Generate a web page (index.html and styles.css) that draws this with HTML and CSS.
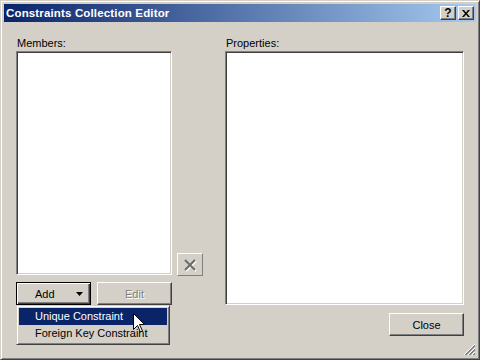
FILE: index.html
```html
<!DOCTYPE html>
<html lang="en">
<head>
  <meta charset="UTF-8">
  <title>Constraints Collection Editor</title>
  <link rel="stylesheet" href="styles.css">
</head>
<body>
  <div class="window">
    <div class="titlebar">
      <span class="title">Constraints Collection Editor</span>
      <div class="tbtns">
        <span class="tbtn help">?</span>
        <span class="tbtn">
          <svg width="8" height="7" viewBox="0 0 8 7"><path d="M0 0h2l2 2.5L6 0h2L5 3.5 8 7H6L4 4.5 2 7H0l3-3.5z" fill="#000"/></svg>
        </span>
      </div>
    </div>

    <div class="client">
      <div class="left">
        <div class="label">Members:</div>
        <div class="listrow">
          <div class="list members"></div>
          <div class="delbtn">
            <svg width="14" height="14" viewBox="0 0 14 14">
              <path d="M2 2L12 12M12 2L2 12" stroke="#fff" stroke-width="2" transform="translate(1 1)"/>
              <path d="M2 2L12 12M12 2L2 12" stroke="#6a6a6a" stroke-width="2"/>
            </svg>
          </div>
        </div>
        <div class="btnrow">
          <div class="btn default">
            <span class="addtxt">Add</span>
            <svg width="7" height="4" viewBox="0 0 7 4"><path d="M0 0h7L3.5 4z" fill="#000"/></svg>
          </div>
          <div class="btn disabled">Edit</div>
        </div>
      </div>

      <div class="right">
        <div class="label">Properties:</div>
        <div class="list props"></div>
        <div class="closerow">
          <div class="btn">Close</div>
        </div>
      </div>

      <div class="menu">
        <div class="item active">Unique Constraint</div>
        <div class="item">Foreign Key Constraint</div>
      </div>

      <svg class="pointer" width="12" height="20" viewBox="0 0 12 20">
        <path d="M0.5 0.5V16.5L4.5 12.5L7.5 19L9.5 18L6.5 11.5H11.5Z" fill="#fff" stroke="#000" stroke-width="1"/>
      </svg>

      <svg class="grip" width="13" height="13" viewBox="0 0 13 13">
        <path d="M12 1L1 12M12 5L5 12M12 9L9 12" stroke="#fff" stroke-width="1"/>
        <path d="M12 2L2 12M12 3L3 12M12 6L6 12M12 7L7 12M12 10L10 12M12 11L11 12" stroke="#808080" stroke-width="1"/>
      </svg>
    </div>
  </div>
</body>
</html>
```

FILE: styles.css
```css
*{
  margin: 0;
  padding: 0;
  box-sizing: border-box;
}
body{
  background: #d4d0c8;
  font-family: "Liberation Sans", Arial, sans-serif;
  font-size: 11px;
  color: #000;
}
.window{
  width: 480px;
  height: 360px;
  background: #d4d0c8;
  border: 1px solid;
  border-color: #d4d0c8 #404040 #404040 #d4d0c8;
  box-shadow: inset 1px 1px #fff, inset -1px -1px #808080;
  padding: 3px;
  display: flex;
  flex-direction: column;
}
.titlebar{
  height: 18px;
  display: flex;
  align-items: center;
  justify-content: space-between;
  padding: 0 2px;
  background: linear-gradient(to right, #0a246a, #a6caf0);
}
.title{
  color: #fff;
  font-weight: bold;
  font-size: 11.5px;
  letter-spacing: 0.15px;
}
.tbtns{
  display: flex;
  gap: 2px;
}
.tbtn{
  width: 16px;
  height: 14px;
  background: #d4d0c8;
  border: 1px solid;
  border-color: #fff #404040 #404040 #fff;
  box-shadow: inset -1px -1px #808080;
  display: flex;
  align-items: center;
  justify-content: center;
}
.help{
  font-weight: bold;
  font-size: 12px;
  line-height: 12px;
}
.client{
  flex: 1;
  position: relative;
  display: flex;
  padding: 15px 0 0 12px;
}
.label{
  height: 14px;
  line-height: 12px;
  padding-left: 1px;
}
.left{
  display: flex;
  flex-direction: column;
  width: 187px;
}
.listrow{
  display: flex;
  align-items: flex-end;
  gap: 5px;
}
.list{
  background: #fff;
  border: 1px solid;
  border-color: #808080 #fff #fff #808080;
  box-shadow: inset 1px 1px #404040, inset -1px -1px #d4d0c8;
}
.members{
  width: 156px;
  height: 224px;
}
.delbtn{
  width: 26px;
  height: 23px;
  margin-bottom: -1px;
  border: 1px solid;
  border-color: #fff #808080 #808080 #fff;
  display: flex;
  align-items: center;
  justify-content: center;
}
.btnrow{
  display: flex;
  gap: 6px;
  margin-top: 7px;
}
.btn{
  width: 75px;
  height: 23px;
  border: 1px solid;
  border-color: #fff #404040 #404040 #fff;
  box-shadow: inset -1px -1px #808080;
  display: flex;
  align-items: center;
  justify-content: center;
}
.btn.default{
  border: 1px solid #000;
  box-shadow: inset 1px 1px #fff, inset -1px -1px #404040, inset -2px -2px #808080;
  justify-content: flex-start;
  padding-left: 18px;
}
.addtxt{
  margin-right: 21px;
}
.btn.disabled{
  color: #808080;
  text-shadow: 1px 1px #fff;
}
.right{
  margin-left: 22px;
  display: flex;
  flex-direction: column;
  width: 239px;
}
.props{
  height: 254px;
}
.closerow{
  display: flex;
  justify-content: flex-end;
  margin-top: 8px;
}
.menu{
  position: absolute;
  left: 12px;
  top: 283px;
  width: 154px;
  background: #d4d0c8;
  border: 1px solid;
  border-color: #d4d0c8 #404040 #404040 #d4d0c8;
  box-shadow: inset 1px 1px #fff, inset -1px -1px #808080;
  padding: 2px;
}
.item{
  height: 17px;
  line-height: 17px;
  padding-left: 16px;
}
.item.active{
  background: #0a246a;
  color: #fff;
}
.pointer{
  position: absolute;
  left: 129px;
  top: 291px;
}
.grip{
  position: absolute;
  right: 0;
  bottom: 0;
}
```
